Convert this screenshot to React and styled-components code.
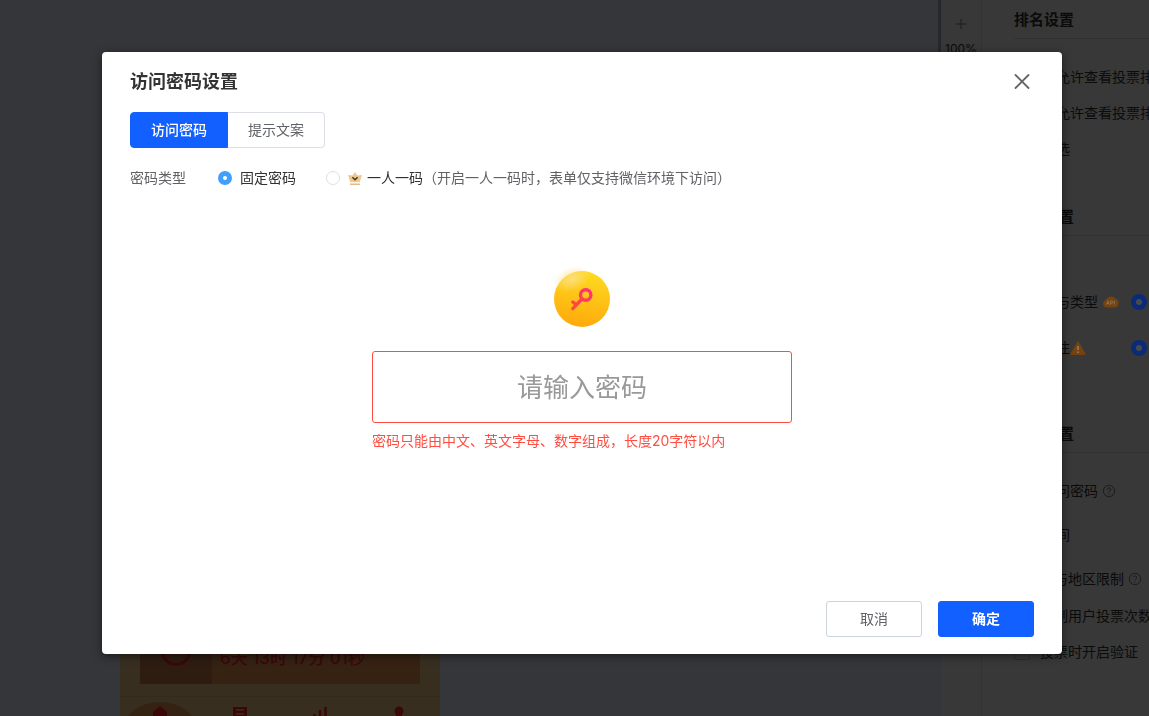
import { createGlobalStyle, styled } from 'styled-components'
import { Plus } from 'lucide-react'

const GlobalStyle = createGlobalStyle`
  * { box-sizing: border-box; }
  body {
    margin: 0;
    background: #343639;
    font-family: Inter, "Noto Sans CJK SC", sans-serif;
    font-size: 14px;
    line-height: 20px;
    color: #0b0b0b;
  }
  h2, h3, p, fieldset { margin: 0; padding: 0; border: 0; }
  button, input { font: inherit; }
`

const Editor = styled.div`
  display: flex;
  height: 100vh;
  overflow: hidden;
`

const Canvas = styled.div`
  flex: 1;
  min-width: 0;
  display: flex;
  flex-direction: column;
  justify-content: flex-end;
  padding-left: 120px;
  background: #343639;
`

const ScrollTrack = styled.div`
  width: 3px;
  background: #343639;
`

const ScrollThumb = styled.div`
  height: 50%;
  background: #26282b;
`

const Poster = styled.div`
  width: 320px;
  background: #382e20;
  color: #3a0808;
`

const Countdown = styled.div`
  display: flex;
  height: 80px;
  margin: 0 20px 12px;
  border-radius: 2px;
  overflow: hidden;
  background: #352213;
`

const CountdownIcon = styled.div`
  display: flex;
  align-items: flex-end;
  justify-content: center;
  width: 72px;
  padding-bottom: 18px;
  background: #2e1c10;
`

const CountdownTime = styled.p`
  padding: 44px 8px 0;
  font-size: 17px;
  line-height: 20px;
  font-weight: 500;
  white-space: pre;
`

const PosterNav = styled.div`
  display: grid;
  grid-template-columns: repeat(4, 1fr);
  height: 20px;
  border-top: 1px solid #33291d;
  overflow: hidden;

  svg { display: block; width: 80px; height: 20px; }
`

const ZoomBar = styled.div`
  display: flex;
  flex-direction: column;
  align-items: center;
  gap: 8px;
  width: 41px;
  padding-top: 16px;
  background: #383838;
  border-right: 1px solid #323232;
  font-size: 12px;
  line-height: 18px;

  svg { color: #1c1c1c; }
`

const Panel = styled.aside`
  width: 167px;
  padding-left: 32px;
  background: #383838;
  overflow: hidden;
  white-space: nowrap;
`

const PanelTitle = styled.h3`
  height: 39px;
  padding-top: 9px;
  border-bottom: 1px solid #303030;
  font-size: 15px;
  line-height: 22px;
  font-weight: 700;
`

const Group = styled.div`
  height: ${p => p.$height};
  padding-top: ${p => p.$top};
`

const Row = styled.div`
  display: flex;
  align-items: center;
  height: ${p => p.$height || '36px'};

  label { display: flex; align-items: center; gap: ${p => p.$gap || '12px'}; }
  svg { flex: none; margin-left: ${p => p.$icon || '4px'}; }
`

const DimCheck = styled.input`
  appearance: none;
  flex: none;
  width: 16px;
  height: 16px;
  margin: 0;
  border: 1px solid #2c2c2c;
  border-radius: 2px;
`

const DimRadio = styled.input`
  appearance: none;
  flex: none;
  width: 16px;
  height: 16px;
  margin: 0 0 0 ${p => p.$left};
  border: 5px solid #0b2b78;
  border-radius: 50%;
  background: #4a4a4c;
`

const Mask = styled.div`
  position: fixed;
  inset: 0;
  padding: 52px 87px 62px 102px;
`

const Dialog = styled.div`
  display: flex;
  flex-direction: column;
  height: 100%;
  padding: 16px 28px 17px;
  border-radius: 4px;
  background: #fff;
  box-shadow: 0 2px 8px rgba(0, 0, 0, 0.5);
  color: #606266;
`

const DialogHead = styled.header`
  display: flex;
  align-items: center;
  justify-content: space-between;
  height: 28px;

  h2 { font-size: 18px; line-height: 28px; font-weight: 700; color: #333; }
`

const CloseButton = styled.button`
  display: flex;
  width: 24px;
  height: 24px;
  padding: 4px;
  border: 0;
  background: none;
  color: #666;
  cursor: pointer;
`

const Tabs = styled.div`
  display: flex;
  margin-top: 16px;
`

const Tab = styled.button`
  width: ${p => (p.$active ? '98px' : '97px')};
  height: 36px;
  padding: 0;
  border: 1px solid ${p => (p.$active ? '#1260ff' : '#dcdfe6')};
  border-left-width: ${p => (p.$active ? '1px' : '0')};
  border-radius: ${p => (p.$active ? '4px 0 0 4px' : '0 4px 4px 0')};
  background: ${p => (p.$active ? '#1260ff' : '#fff')};
  color: ${p => (p.$active ? '#fff' : '#606266')};
  font-weight: ${p => (p.$active ? 500 : 400)};
`

const TypeRow = styled.fieldset`
  display: flex;
  align-items: center;
  height: 20px;
  margin-top: 20px;
`

const TypeName = styled.span`
  width: 88px;
`

const Choice = styled.label`
  display: flex;
  align-items: center;
  gap: 8px;
  margin-right: ${p => p.$right || '0'};
  color: #303133;

  svg { margin-right: -3px; }
`

const Radio = styled.input`
  appearance: none;
  width: 14px;
  height: 14px;
  margin: 0;
  border: 1px solid #dcdfe6;
  border-radius: 50%;
  background: #fff;

  &:checked { border: 5px solid #409eff; }
`

const PasswordBox = styled.div`
  flex: 1;
  display: flex;
  flex-direction: column;
  width: 420px;
  max-width: 100%;
  margin: 79px auto 0;

  svg { align-self: center; }
`

const PasswordInput = styled.input`
  width: 100%;
  height: 72px;
  margin-top: 20px;
  border: 1px solid #ff4d42;
  border-radius: 3px;
  outline: 0;
  background: #fff;
  font-size: 26px;
  text-align: center;

  &::placeholder { color: #999; opacity: 1; }
`

const ErrorText = styled.p`
  margin-top: 8px;
  color: #ff4d42;
`

const Actions = styled.footer`
  display: flex;
  justify-content: flex-end;
  gap: 16px;
`

const ActionButton = styled.button`
  width: 96px;
  height: 36px;
  padding: 0;
  border: 1px solid ${p => (p.$primary ? '#1260ff' : '#ccd3dc')};
  border-radius: 3px;
  background: ${p => (p.$primary ? '#1260ff' : '#fff')};
  color: ${p => (p.$primary ? '#fff' : '#606266')};
  font-weight: ${p => (p.$primary ? 700 : 400)};
`

const KeyBadge = () => (
  <svg width="64" height="64" viewBox="0 0 64 64" aria-hidden="true">
    <defs>
      <linearGradient id="coin" x1="0.6" y1="0" x2="0.45" y2="1">
        <stop offset="0" stopColor="#fddb20" />
        <stop offset="1" stopColor="#ffa90c" />
      </linearGradient>
      <radialGradient id="shine">
        <stop offset="0" stopColor="#fde08a" stopOpacity="0.9" />
        <stop offset="1" stopColor="#fde08a" stopOpacity="0" />
      </radialGradient>
      <linearGradient id="key" gradientUnits="userSpaceOnUse" x1="42" y1="22" x2="22" y2="42">
        <stop offset="0" stopColor="#ff2f86" />
        <stop offset="1" stopColor="#ff4d2e" />
      </linearGradient>
    </defs>
    <circle cx="32" cy="32" r="28" fill="url(#coin)" />
    <ellipse cx="22" cy="12" rx="19" ry="12" fill="url(#shine)" transform="rotate(-20 22 12)" />
    <g fill="none" stroke="url(#key)" strokeWidth="3.4" strokeLinecap="round">
      <circle cx="35.7" cy="28" r="5.2" />
      <path d="M32 31.8L22.8 41.6M22.8 35L26.6 37.8" />
    </g>
  </svg>
)

const Crown = () => (
  <svg width="14" height="16" viewBox="0 0 14 16" aria-hidden="true">
    <path d="M7 2L9.4 5.6L14 5L11.7 12.2H2.3L0 5L4.6 5.600Z" fill="#ecc990" />
    <path d="M2 13.500h10v1.500H2z" fill="#e3bd80" />
    <path d="M4.400 7.200L7 9.800L9.600 7.200" fill="none" stroke="#4a3420" strokeWidth="1.5" />
  </svg>
)

const Help = () => (
  <svg width="14" height="14" viewBox="0 0 14 14" fill="none" stroke="#1a1a1a" aria-hidden="true">
    <circle cx="7" cy="7" r="5.7" strokeWidth="0.9" />
    <path d="M5.3 5.6a1.7 1.7 0 1 1 2.5 1.5c-.6.3-.8.6-.8 1.2M7 9.4v.9" strokeWidth="0.9" />
  </svg>
)

const ApiCloud = () => (
  <svg width="18" height="14" viewBox="0 0 18 14" aria-hidden="true">
    <path d="M4.5 12.6a3.9 3.9 0 0 1-.6-7.600A5.400 5.400 0 0 1 13 3.400a4.700 4.700 0 0 1 0 9.200z" fill="#754310" />
    <path d="M4.500 9.600L6 5.800L7.200 9.600M5 8.400h2M8.600 9.800V6h1.300a1.100 1.100 0 0 1 0 2.300H8.600M12.600 5.800L12.200 9.600" fill="none" stroke="#8d7155" strokeWidth="0.9" />
  </svg>
)

const Warning = () => (
  <svg width="16" height="16" viewBox="0 0 16 16" aria-hidden="true">
    <path d="M8 1.5L15.4 14.4H.6Z" fill="#754310" stroke="#754310" strokeLinejoin="round" />
    <path d="M8 6v4M8 11.4v1.6" stroke="#8d8072" strokeWidth="1.6" />
  </svg>
)

const CheckRow = ({ text, height, gap, help }) => (
  <Row $height={height} $gap={gap}>
    <label><DimCheck type="checkbox" />{text}</label>
    {help && <Help />}
  </Row>
)

const App = () => {
  return (
    <>
      <GlobalStyle />
      <Editor>
        <Canvas>
          <Poster>
            <Countdown>
              <CountdownIcon>
                <svg width="30" height="30" viewBox="0 0 30 30" aria-hidden="true">
                  <circle cx="15" cy="15" r="13.5" fill="none" stroke="#3a0808" strokeWidth="3" />
                </svg>
              </CountdownIcon>
              <CountdownTime>6天 13时 17分 01秒</CountdownTime>
            </Countdown>
            <PosterNav>
              <svg viewBox="0 0 80 20"><ellipse cx="40" cy="30" rx="35" ry="25" fill="#352213" /><path d="M40 9l7 6v6H33v-6z" fill="#3a0808" /></svg>
              <svg viewBox="0 0 80 20"><path d="M33 10h14v12H33z" fill="#3a0808" /><path d="M36 13h8M36 17h8" stroke="#382e20" strokeWidth="1.5" /></svg>
              <svg viewBox="0 0 80 20"><path d="M34.5 17v4M40 13v8M45.5 10v11" stroke="#3a0808" strokeWidth="2.5" /></svg>
              <svg viewBox="0 0 80 20"><circle cx="39" cy="14" r="4.5" fill="#3a0808" /><path d="M36 17h6v5h-6z" fill="#3a0808" /></svg>
            </PosterNav>
          </Poster>
        </Canvas>
        <ScrollTrack><ScrollThumb /></ScrollTrack>
        <ZoomBar>
          <Plus size={16} strokeWidth={1.5} />
          <span>100%</span>
        </ZoomBar>
        <Panel>
          <PanelTitle>排名设置</PanelTitle>
          <Group $height="158px" $top="20px">
            <CheckRow text="仅允许查看投票排名" />
            <CheckRow text="不允许查看投票排名" />
            <CheckRow text="可选" />
          </Group>
          <PanelTitle>投票设置</PanelTitle>
          <Group $height="178px" $top="43px">
            <Row $height="46px">
              <span>投票参与类型</span>
              <ApiCloud />
              <DimRadio type="radio" name="kind" aria-label="参与类型" $left="11px" defaultChecked />
            </Row>
            <Row $height="46px" $icon="0">
              <span>强制关注</span>
              <Warning />
              <DimRadio type="radio" name="follow" aria-label="强制关注" $left="45px" defaultChecked />
            </Row>
          </Group>
          <PanelTitle>访问设置</PanelTitle>
          <Group $top="16px">
            <CheckRow text="访问密码" height="44px" help />
            <CheckRow text="时间" height="44px" />
            <CheckRow text="省与地区限制" height="44px" gap="10px" help />
            <CheckRow text="限制用户投票次数" height="30px" gap="10px" />
            <CheckRow text="投票时开启验证" height="42px" gap="10px" />
          </Group>
        </Panel>
      </Editor>

      <Mask>
        <Dialog role="dialog" aria-labelledby="dialog-title">
          <DialogHead>
            <h2 id="dialog-title">访问密码设置</h2>
            <CloseButton type="button" aria-label="关闭">
              <svg width="16" height="16" viewBox="0 0 16 16" fill="none" stroke="currentColor" strokeWidth="1.8" strokeLinecap="round">
                <path d="M1.5 1L14.5 14M14.5 1L1.5 14" />
              </svg>
            </CloseButton>
          </DialogHead>
          <Tabs>
            <Tab type="button" $active>访问密码</Tab>
            <Tab type="button">提示文案</Tab>
          </Tabs>
          <TypeRow>
            <TypeName>密码类型</TypeName>
            <Choice $right="30px">
              <Radio type="radio" name="type" defaultChecked />
              固定密码
            </Choice>
            <Choice>
              <Radio type="radio" name="type" />
              <Crown />
              一人一码
            </Choice>
            <span>（开启一人一码时，表单仅支持微信环境下访问）</span>
          </TypeRow>
          <PasswordBox>
            <KeyBadge />
            <PasswordInput type="text" placeholder="请输入密码" aria-label="访问密码" />
            <ErrorText>密码只能由中文、英文字母、数字组成，长度20字符以内</ErrorText>
          </PasswordBox>
          <Actions>
            <ActionButton type="button">取消</ActionButton>
            <ActionButton type="button" $primary>确定</ActionButton>
          </Actions>
        </Dialog>
      </Mask>
    </>
  )
}

export default App
